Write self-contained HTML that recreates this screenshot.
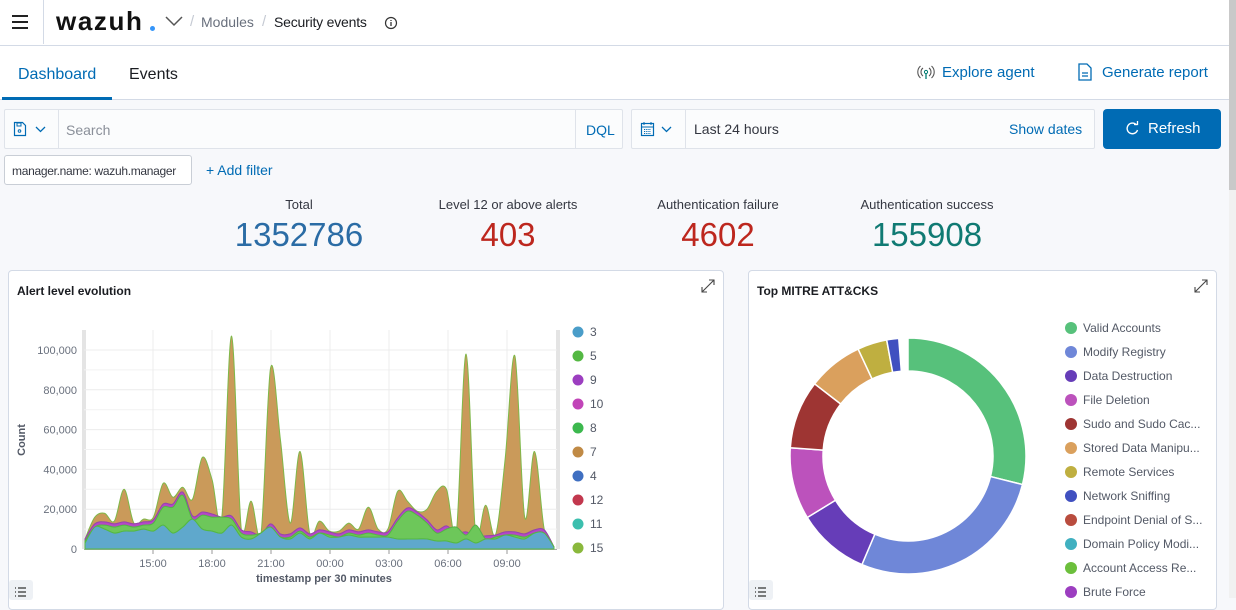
<!DOCTYPE html>
<html><head><meta charset="utf-8"><style>
*{box-sizing:border-box;margin:0;padding:0}
body{width:1236px;height:598px;overflow:hidden;background:#f7f8fb;font-family:"Liberation Sans",sans-serif;position:relative;color:#343741}
.abs{position:absolute}
.hdr{left:0;top:0;width:1229px;height:46px;background:#fff;border-bottom:1px solid #d3dae6}
.tabs{left:0;top:46px;width:1229px;height:54px;background:#fff;border-bottom:1px solid #d3dae6}
.box{background:#fbfcfd;border:1px solid #dfe3ea;border-radius:2px}
.panel{background:#fff;border:1px solid #d3dae6;border-radius:4px}
.stat{text-align:center}
.stat .l{font-size:13px;color:#343741}
.stat .v{font-size:33px;margin-top:4px}
</style></head><body>
<div class="abs hdr"></div>
<div class="abs" style="left:12px;top:15px;width:16px;height:2px;background:#222;box-shadow:0 6px 0 #222,0 12px 0 #222"></div>
<div class="abs" style="left:43px;top:0;width:1px;height:44px;background:#d3dae6"></div>
<div class="abs" style="left:56px;top:6px;font-size:26px;font-weight:bold;letter-spacing:1.6px;color:#111">wazuh</div>
<div class="abs" style="left:150px;top:26px;width:5px;height:5px;border-radius:50%;background:#3595f9"></div>
<svg class="abs" style="left:164px;top:14px" width="20" height="14"><path d="M2 3l8 8 8-8" fill="none" stroke="#555" stroke-width="1.5"/></svg>
<div class="abs" style="left:190px;top:13px;font-size:15px;color:#c5cad3">/</div>
<div class="abs" style="left:201px;top:14px;font-size:14px;color:#69707d">Modules</div>
<div class="abs" style="left:262px;top:13px;font-size:15px;color:#c5cad3">/</div>
<div class="abs" style="left:274px;top:14px;font-size:14px;color:#1a1c21;letter-spacing:-0.2px">Security events</div>
<svg class="abs" style="left:384px;top:16px" width="14" height="14"><circle cx="7" cy="7" r="5.5" fill="none" stroke="#333" stroke-width="1.2"/><path d="M7 6v4M7 4v1" stroke="#333" stroke-width="1.3"/></svg>

<div class="abs tabs"></div>
<div class="abs" style="left:18px;top:66px;font-size:16px;color:#006bb4">Dashboard</div>
<div class="abs" style="left:2px;top:97px;width:110px;height:3px;background:#006bb4"></div>
<div class="abs" style="left:129px;top:66px;font-size:16px;color:#1a1c21">Events</div>
<svg class="abs" style="left:917px;top:64px" width="18" height="16"><path d="M6 4a5 5 0 0 0 0 8M12 4a5 5 0 0 1 0 8M3.5 2a8 8 0 0 0 0 12M14.5 2a8 8 0 0 1 0 12" fill="none" stroke="#555" stroke-width="1.1"/><circle cx="9" cy="8" r="1.6" fill="none" stroke="#017d73"/><path d="M9 10v5" stroke="#017d73" stroke-width="1.3"/></svg>
<div class="abs" style="left:942px;top:64px;font-size:15px;color:#006bb4">Explore agent</div>
<svg class="abs" style="left:1077px;top:63px" width="16" height="18"><path d="M2 1h8l4 4v12H2z" fill="none" stroke="#006bb4" stroke-width="1.3"/><path d="M5 10h6M5 13h6" stroke="#006bb4" stroke-width="1.2"/></svg>
<div class="abs" style="left:1102px;top:64px;font-size:15px;color:#006bb4">Generate report</div>

<div class="abs box" style="left:4px;top:109px;width:619px;height:40px"></div>
<div class="abs" style="left:58px;top:109px;width:1px;height:40px;background:#dfe3ea"></div>
<div class="abs" style="left:575px;top:109px;width:1px;height:40px;background:#dfe3ea"></div>
<svg class="abs" style="left:13px;top:121px" width="36" height="16"><path d="M1.5 1.5h8l3 3v10h-11z" fill="none" stroke="#006bb4" stroke-width="1.2"/><rect x="4" y="2" width="4" height="3" fill="none" stroke="#006bb4"/><circle cx="6.5" cy="10" r="1.3" fill="none" stroke="#006bb4"/><path d="M23 6l4.5 4.5L32 6" fill="none" stroke="#006bb4" stroke-width="1.3"/></svg>
<div class="abs" style="left:66px;top:122px;font-size:14px;color:#8a8f99">Search</div>
<div class="abs" style="left:586px;top:122px;font-size:14px;color:#006bb4">DQL</div>
<div class="abs box" style="left:631px;top:109px;width:464px;height:40px"></div>
<div class="abs" style="left:685px;top:109px;width:1px;height:40px;background:#dfe3ea"></div>
<svg class="abs" style="left:640px;top:121px" width="40" height="16"><rect x="1.5" y="2.5" width="12" height="12" fill="none" stroke="#006bb4" stroke-width="1.2"/><path d="M1.5 6h12M4 1v3M11 1v3" stroke="#006bb4"/><path d="M4 8.5h7M4 10.5h7M4 12.5h7" stroke="#006bb4" stroke-dasharray="1.2 1"/><path d="M22 6l4.5 4.5L31 6" fill="none" stroke="#006bb4" stroke-width="1.3"/></svg>
<div class="abs" style="left:694px;top:121px;font-size:14px;color:#343741">Last 24 hours</div>
<div class="abs" style="left:1009px;top:121px;font-size:14px;color:#006bb4">Show dates</div>
<div class="abs" style="left:1103px;top:109px;width:118px;height:40px;background:#006bb4;border-radius:4px"></div>
<svg class="abs" style="left:1125px;top:121px" width="15" height="15"><path d="M11.5 4A5.3 5.3 0 1 0 12.5 9" fill="none" stroke="#fff" stroke-width="1.4"/><path d="M9 3.5h3.5V0" fill="none" stroke="#fff" stroke-width="1.3"/></svg>
<div class="abs" style="left:1148px;top:120px;font-size:15px;color:#fff">Refresh</div>

<div class="abs" style="left:4px;top:155px;width:188px;height:30px;background:#fff;border:1px solid #c9ced6;border-radius:3px;font-size:12px;padding:8px 0 0 7px;color:#343741;white-space:nowrap;letter-spacing:-0.3px;overflow:hidden">manager.name: wazuh.manager</div>
<div class="abs" style="left:206px;top:162px;font-size:14px;color:#006bb4">+ Add filter</div>

<div class="abs stat" style="left:199px;top:197px;width:200px"><div class="l">Total</div><div class="v" style="color:#2b6ca5">1352786</div></div>
<div class="abs stat" style="left:408px;top:197px;width:200px"><div class="l">Level 12 or above alerts</div><div class="v" style="color:#bd271e">403</div></div>
<div class="abs stat" style="left:618px;top:197px;width:200px"><div class="l">Authentication failure</div><div class="v" style="color:#bd271e">4602</div></div>
<div class="abs stat" style="left:827px;top:197px;width:200px"><div class="l">Authentication success</div><div class="v" style="color:#107a73">155908</div></div>

<div class="abs panel" style="left:8px;top:270px;width:716px;height:340px"></div>
<div class="abs" style="left:17px;top:284px;font-size:12px;font-weight:bold;color:#1a1c21">Alert level evolution</div>
<svg class="abs" style="left:700px;top:278px" width="16" height="16"><path d="M2 14L14 2M9 2h5v5M2 9v5h5" fill="none" stroke="#444" stroke-width="1.1"/></svg>
<div class="abs" style="left:9px;top:580px;width:24px;height:20px;background:#eef1f5;border-radius:3px"></div>
<svg class="abs" style="left:14px;top:587px" width="14" height="11"><path d="M1 1h1M4 1h8M1 5h1M4 5h8M1 9h1M4 9h8" stroke="#333" stroke-width="1.3"/></svg>

<div class="abs panel" style="left:748px;top:270px;width:469px;height:340px"></div>
<div class="abs" style="left:757px;top:284px;font-size:12px;font-weight:bold;color:#1a1c21">Top MITRE ATT&amp;CKS</div>
<svg class="abs" style="left:1193px;top:278px" width="16" height="16"><path d="M2 14L14 2M9 2h5v5M2 9v5h5" fill="none" stroke="#444" stroke-width="1.1"/></svg>
<div class="abs" style="left:749px;top:580px;width:24px;height:20px;background:#eef1f5;border-radius:3px"></div>
<svg class="abs" style="left:754px;top:587px" width="14" height="11"><path d="M1 1h1M4 1h8M1 5h1M4 5h8M1 9h1M4 9h8" stroke="#333" stroke-width="1.3"/></svg>

<svg id="chart" class="abs" style="left:0;top:0" width="1236" height="598"></svg>

<div class="abs" style="left:1229px;top:0;width:7px;height:598px;background:#f1f1f1"></div>
<div class="abs" style="left:1229px;top:0;width:7px;height:190px;background:#c9c9c9"></div>

<script>
var s=document.getElementById('chart'),h='';
function y(v){return 549-v*1.99;}
h+='<rect x="82" y="330" width="4" height="219" fill="#e4e4e4"/><rect x="556" y="330" width="4" height="219" fill="#e4e4e4"/>';
for(var k=0;k<=5;k++){var yy=y(k*20);h+='<line x1="84" x2="557" y1="'+yy+'" y2="'+yy+'" stroke="#ececec"/>';h+='<text x="77" y="'+(yy+4)+'" text-anchor="end" font-size="11" fill="#69707d">'+(k==0?'0':(k*20)+',000')+'</text>';}
for(k=0;k<5;k++){var yy=y(k*20+10);h+='<line x1="84" x2="557" y1="'+yy+'" y2="'+yy+'" stroke="#f2f2f2"/>';}
var tl=['15:00','18:00','21:00','00:00','03:00','06:00','09:00'];
for(k=0;k<7;k++){var xx=153+k*59;h+='<line x1="'+xx+'" x2="'+xx+'" y1="330" y2="549" stroke="#ececec"/><line x1="'+xx+'" x2="'+xx+'" y1="549" y2="554" stroke="#999"/><text x="'+xx+'" y="567" text-anchor="middle" font-size="11" fill="#69707d">'+tl[k]+'</text>';}
h+='<line x1="84" x2="557" y1="549.5" y2="549.5" stroke="#aaa"/>';
h+='<text x="324" y="582" text-anchor="middle" font-size="11" font-weight="bold" fill="#535966">timestamp per 30 minutes</text>';
h+='<text transform="translate(25,440) rotate(-90)" text-anchor="middle" font-size="11" font-weight="bold" fill="#535966">Count</text>';
var T=[5,16,18,14,30,13,15,16,33,26,31,25,46,35,16,107,10,24,7,91,55,13,49,8,14,9,9,13,10,21,10,10,29,24,19,20,29,30,8,98,6,22,7,45,97,16,49,10,1];
var B=[3,11,10,8,9,9,10,9,12,8,11,15,10,9,8,12,6,5,8,11,6,5,8,5,8,6,6,7,6,6,6,6,5,5,5,5,4,4,3,5,3,5,5,7,6,5,8,8,1];
var G=[4,11,12,11,12,11,12,13,21,21,27,13,17,16,16,15,8,7,6,11,6,6,9,6,8,7,6,8,7,8,7,7,14,19,17,13,8,10,11,7,12,5,6,6,7,6,8,8,1];
var n=T.length,X=[];for(var i=0;i<n;i++)X.push(85+i*(469/(n-1)));
function curve(v,rev){var p=[];for(var i=0;i<n;i++)p.push([X[i],y(v[i])]);if(rev)p.reverse();var d='';for(i=0;i<p.length-1;i++){var p0=p[i>0?i-1:i],p1=p[i],p2=p[i+1],p3=p[i+2<p.length?i+2:i+1];var c1x=p1[0]+(p2[0]-p0[0])/6,c1y=p1[1]+(p2[1]-p0[1])/6,c2x=p2[0]-(p3[0]-p1[0])/6,c2y=p2[1]-(p3[1]-p1[1])/6;c1y=Math.min(c1y,549);c2y=Math.min(c2y,549);d+=' C'+c1x.toFixed(1)+' '+c1y.toFixed(1)+' '+c2x.toFixed(1)+' '+c2y.toFixed(1)+' '+p2[0].toFixed(1)+' '+p2[1].toFixed(1);}return {s:p[0],d:d};}
function area(top,bot,fill,stroke){var a=curve(top,false),b=curve(bot,true);var d='M'+a.s[0]+' '+a.s[1]+a.d+' L'+b.s[0]+' '+b.s[1]+b.d+'Z';h+='<path d="'+d+'" fill="'+fill+'" stroke="'+stroke+'" stroke-width="1" stroke-linejoin="round"/>';}
var Z=[],Gt=[],P=[];for(i=0;i<n;i++){Z.push(0);Gt.push(Math.max(G[i],B[i]));P.push(Math.min(T[i],Gt[i]+1.6));}
area(T,P,'#ca9a5a','#7fb849');
area(P,Gt,'#b548c6','#9a3fb0');
area(Gt,B,'#6dc75a','#54b843');
area(B,Z,'#5fa8cc','#54b843');
var lc=['#4a9dc9','#54b843','#9c3ec0','#c144b8','#3cb84e','#c08a45','#3f6fc1','#c2384e','#3cbfae','#8ab83c'],ll=['3','5','9','10','8','7','4','12','11','15'];
for(k=0;k<10;k++){var yy=332+k*24;h+='<circle cx="578" cy="'+yy+'" r="5.5" fill="'+lc[k]+'"/><text x="590" y="'+(yy+4)+'" font-size="12" fill="#535966">'+ll[k]+'</text>';}
var cx=908,cy=456,R=118,r=85;
var seg=[[0,104,'#57c17b'],[104,203,'#6f87d8'],[203,238.6,'#663db8'],[238.6,274,'#bc52bc'],[274,307.7,'#9e3533'],[307.7,335,'#daa05d'],[335,349.6,'#bfaf40'],[349.6,355.5,'#4050c0']];
function pt(a,rr){a=a*Math.PI/180;return (cx+rr*Math.sin(a)).toFixed(2)+' '+(cy-rr*Math.cos(a)).toFixed(2);}
seg.forEach(function(q){var la=(q[1]-q[0])>180?1:0;h+='<path d="M'+pt(q[0],R)+' A'+R+' '+R+' 0 '+la+' 1 '+pt(q[1],R)+' L'+pt(q[1],r)+' A'+r+' '+r+' 0 '+la+' 0 '+pt(q[0],r)+'Z" fill="'+q[2]+'" stroke="#fff" stroke-width="1.5"/>';});
var dl=[['Valid Accounts','#57c17b'],['Modify Registry','#6f87d8'],['Data Destruction','#663db8'],['File Deletion','#bc52bc'],['Sudo and Sudo Cac...','#9e3533'],['Stored Data Manipu...','#daa05d'],['Remote Services','#bfaf40'],['Network Sniffing','#4050c0'],['Endpoint Denial of S...','#b94c3e'],['Domain Policy Modi...','#40b0c0'],['Account Access Re...','#6cbf3c'],['Brute Force','#9c3ec0']];
dl.forEach(function(q,k){var yy=328+k*24;h+='<circle cx="1071" cy="'+yy+'" r="6" fill="'+q[1]+'"/><text x="1083" y="'+(yy+4)+'" font-size="12" fill="#535966">'+q[0]+'</text>';});
s.innerHTML=h;
</script>
</body></html>
